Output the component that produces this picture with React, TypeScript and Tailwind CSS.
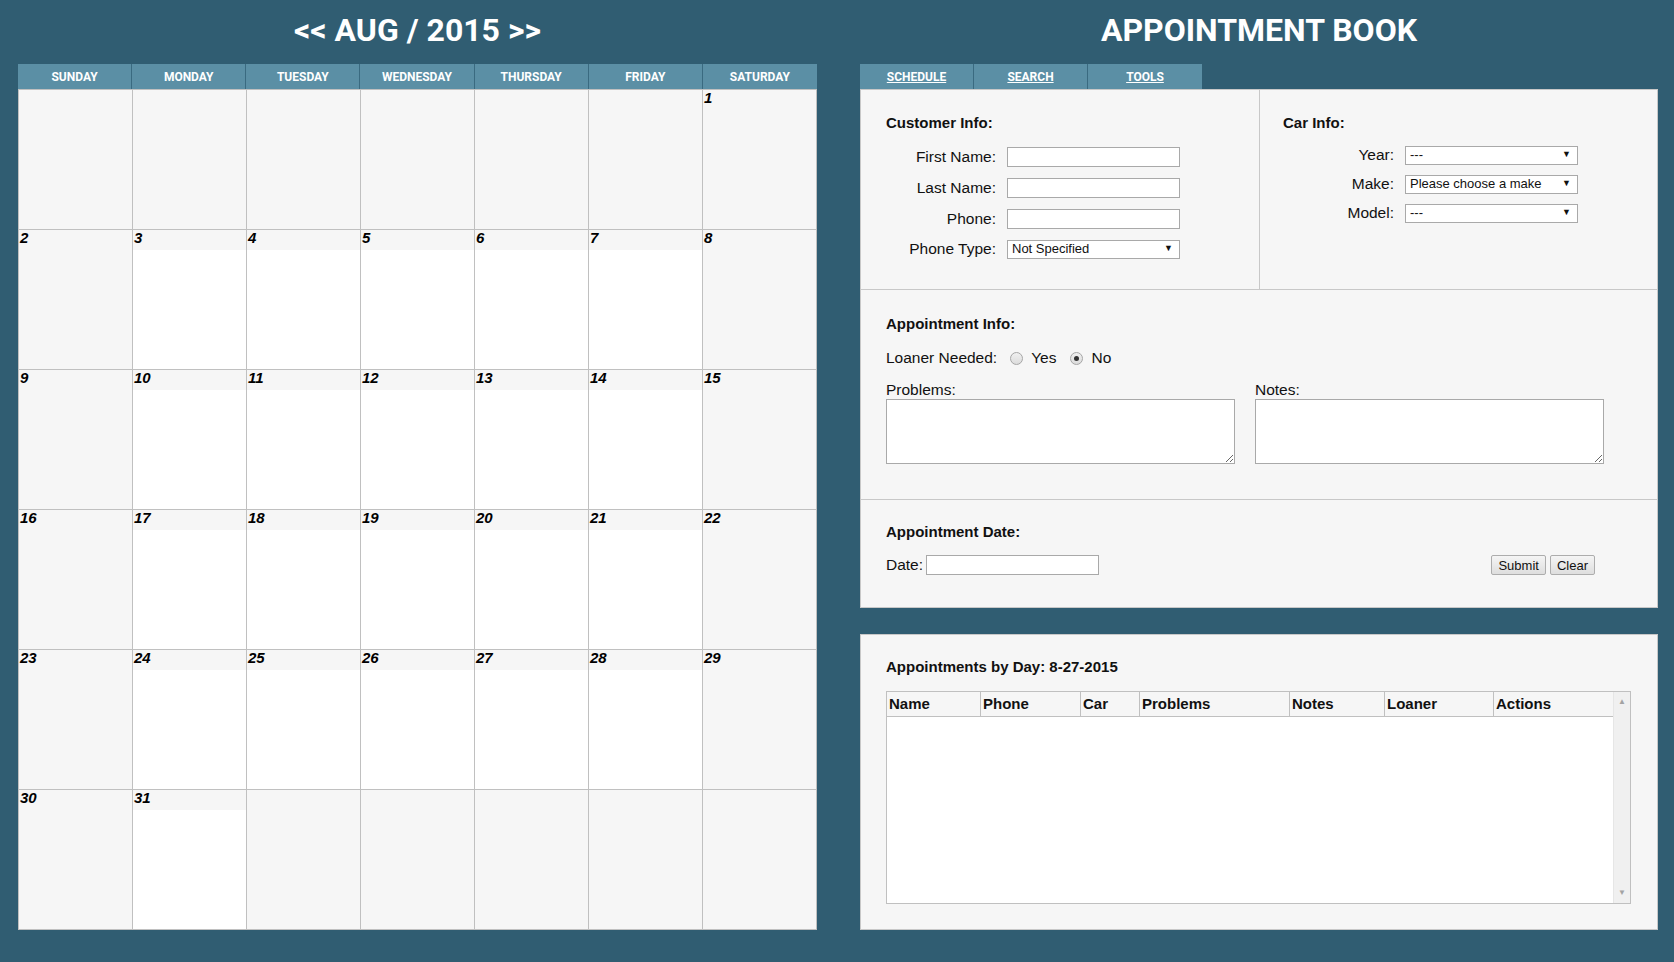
const days = ["SUNDAY", "MONDAY", "TUESDAY", "WEDNESDAY", "THURSDAY", "FRIDAY", "SATURDAY"];

// Aug 2015 starts on a Saturday
const cells: (number | null)[] = [];
for (let i = 0; i < 6; i++) cells.push(null);
for (let d = 1; d <= 31; d++) cells.push(d);
while (cells.length < 42) cells.push(null);

const sans = "font-['Liberation_Sans',Arial,sans-serif]";
const roboto = "font-['Roboto',sans-serif]";

const Field = ({ label, w = "w-[121px]" }: { label: string; w?: string }) => (
    <div className="flex items-center h-[20px]">
        <span className={`${w} text-right pr-[11px] text-[15.5px] text-[#111]`}>{label}</span>
        <input className="w-[173px] h-[20px] bg-white border border-[#a9a9a9] outline-none" />
    </div>
);

const Select = ({ label, value, w = "w-[121px]" }: { label: string; value: string; w?: string }) => (
    <div className="flex items-center h-[18px]">
        <span className={`${w} text-right pr-[11px] text-[15.5px] text-[#111]`}>{label}</span>
        <div className="w-[173px] h-[19px] bg-white border border-[#a9a9a9] flex items-center justify-between pl-[4px] pr-[6px] text-[13px] text-[#111]">
            <span>{value}</span>
            <span className="text-[9px]">▼</span>
        </div>
    </div>
);

const Radio = ({ checked }: { checked?: boolean }) => (
    <span className="w-[13px] h-[13px] rounded-full border border-[#a6a6a6] bg-gradient-to-b from-[#f0f0f0] to-[#dcdcdc] flex items-center justify-center">
        {checked && <span className="w-[5px] h-[5px] rounded-full bg-[#333]" />}
    </span>
);

const Calendar = () => (
    <div className="w-[799px]">
        <div className={`grid grid-cols-7 h-[25px] bg-[#5b8fa5] ${roboto}`}>
            {days.map((d, i) => (
                <div key={d} className={`flex items-center justify-center text-white text-[12px] font-bold ${i < 6 ? "border-r border-[#3a6a80]" : ""}`}>
                    {d}
                </div>
            ))}
        </div>
        <div className="grid grid-cols-7 border-l border-t border-[#c0c0c0]">
            {cells.map((d, i) => {
                const col = i % 7;
                const weekend = col === 0 || col === 6;
                const base = "h-[140px] border-r border-b border-[#c0c0c0] flex flex-col";
                if (d === null) return <div key={i} className={`${base} bg-[#f6f6f6]`} />;
                return (
                    <div key={i} className={`${base} ${weekend ? "bg-[#f6f6f6]" : "bg-white"}`}>
                        <div className={`h-[20px] bg-[#f6f6f6] text-[15px] font-bold italic text-black leading-[16px] pl-[1px] ${sans}`}>{d}</div>
                    </div>
                );
            })}
        </div>
    </div>
);

const Tabs = () => (
    <div className={`flex h-[25px] ${roboto}`}>
        {["SCHEDULE", "SEARCH", "TOOLS"].map((t, i) => (
            <div key={t} className={`w-[114px] bg-[#5b8fa5] flex items-center justify-center text-white text-[12px] font-bold underline ${i < 2 ? "border-r border-[#3a6a80]" : ""}`}>
                {t}
            </div>
        ))}
    </div>
);

const cols = [
    { n: "Name", w: "w-[94px]" },
    { n: "Phone", w: "w-[100px]" },
    { n: "Car", w: "w-[59px]" },
    { n: "Problems", w: "w-[150px]" },
    { n: "Notes", w: "w-[95px]" },
    { n: "Loaner", w: "w-[109px]" },
    { n: "Actions", w: "flex-1" },
];

const App = () => {
    return (
        <div className={`min-h-screen w-full bg-[#305d72] flex pl-[18px] gap-[43px] ${sans}`}>
            {/* Calendar */}
            <div className="w-[799px] flex flex-col">
                <div className={`h-[64px] flex items-center justify-center pb-[4px] text-white text-[32px] font-bold ${roboto}`}>
                    &lt;&lt; AUG / 2015 &gt;&gt;
                </div>
                <Calendar />
            </div>

            {/* Appointment book */}
            <div className="w-[798px] flex flex-col">
                <div className={`h-[64px] flex items-center justify-center pb-[4px] text-white text-[32px] font-bold ${roboto}`}>
                    APPOINTMENT BOOK
                </div>
                <Tabs />
                <div className="bg-[#f6f6f6] border border-[#c8c8c8] text-[#111]">
                    <div className="flex h-[200px] border-b border-[#c8c8c8]">
                        <div className="w-[399px] border-r border-[#c8c8c8] pl-[25px] pt-[24px]">
                            <div className="text-[15px] font-bold h-[18px] leading-[18px]">Customer Info:</div>
                            <div className="mt-[15px] flex flex-col gap-[11px]">
                                <Field label="First Name:" />
                                <Field label="Last Name:" />
                                <Field label="Phone:" />
                                <Select label="Phone Type:" value="Not Specified" />
                            </div>
                        </div>
                        <div className="flex-1 pl-[23px] pt-[24px]">
                            <div className="text-[15px] font-bold h-[18px] leading-[18px]">Car Info:</div>
                            <div className="mt-[14px] flex flex-col gap-[11px]">
                                <Select label="Year:" value="---" w="w-[122px]" />
                                <Select label="Make:" value="Please choose a make" w="w-[122px]" />
                                <Select label="Model:" value="---" w="w-[122px]" />
                            </div>
                        </div>
                    </div>

                    <div className="h-[210px] border-b border-[#c8c8c8] pl-[25px] pt-[25px]">
                        <div className="text-[15px] font-bold h-[18px] leading-[18px]">Appointment Info:</div>
                        <div className="mt-[16px] h-[18px] flex items-center text-[15.5px]">
                            <span>Loaner Needed:</span>
                            <span className="ml-[13px]"><Radio /></span>
                            <span className="ml-[8px]">Yes</span>
                            <span className="ml-[14px]"><Radio checked /></span>
                            <span className="ml-[8px]">No</span>
                        </div>
                        <div className="mt-[14px] flex gap-[20px]">
                            <div className="flex flex-col">
                                <span className="text-[15.5px] h-[18px] leading-[18px]">Problems:</span>
                                <textarea className="w-[349px] h-[65px] bg-white border border-[#a9a9a9] outline-none" />
                            </div>
                            <div className="flex flex-col">
                                <span className="text-[15.5px] h-[18px] leading-[18px]">Notes:</span>
                                <textarea className="w-[349px] h-[65px] bg-white border border-[#a9a9a9] outline-none" />
                            </div>
                        </div>
                    </div>

                    <div className="h-[107px] pl-[25px] pr-[62px] pt-[23px]">
                        <div className="text-[15px] font-bold h-[18px] leading-[18px]">Appointment Date:</div>
                        <div className="mt-[14px] flex items-center h-[20px]">
                            <span className="text-[15.5px] mr-[3px]">Date:</span>
                            <input className="w-[173px] h-[20px] bg-white border border-[#a9a9a9] outline-none" />
                            <div className="ml-auto flex gap-[4px]">
                                <button className="h-[20px] px-[6px] text-[13px] border border-[#adadad] rounded-[2px] bg-gradient-to-b from-[#f5f5f5] to-[#dedede]">Submit</button>
                                <button className="h-[20px] px-[6px] text-[13px] border border-[#adadad] rounded-[2px] bg-gradient-to-b from-[#f5f5f5] to-[#dedede]">Clear</button>
                            </div>
                        </div>
                    </div>
                </div>

                <div className="mt-[26px] h-[296px] bg-[#f6f6f6] border border-[#c8c8c8] pl-[25px] pr-[26px] pt-[23px] text-[#111]">
                    <div className="text-[15px] font-bold h-[18px] leading-[18px]">Appointments by Day: 8-27-2015</div>
                    <div className="mt-[15px] h-[213px] border border-[#c0c0c0] bg-white flex">
                        <div className="flex-1 flex flex-col">
                            <div className="h-[25px] flex border-b border-[#c0c0c0] bg-[#f6f6f6]">
                                {cols.map((c, i) => (
                                    <div key={c.n} className={`${c.w} ${i < 6 ? "border-r border-[#c0c0c0]" : ""} pl-[2px] flex items-center text-[15px] font-bold`}>
                                        {c.n}
                                    </div>
                                ))}
                            </div>
                        </div>
                        <div className="w-[17px] bg-[#f0f0f0] border-l border-[#e6e6e6] flex flex-col items-center justify-between py-[4px] text-[8px] text-[#a3a3a3]">
                            <span>▲</span>
                            <span>▼</span>
                        </div>
                    </div>
                </div>
            </div>
        </div>
    );
};

export default App;
